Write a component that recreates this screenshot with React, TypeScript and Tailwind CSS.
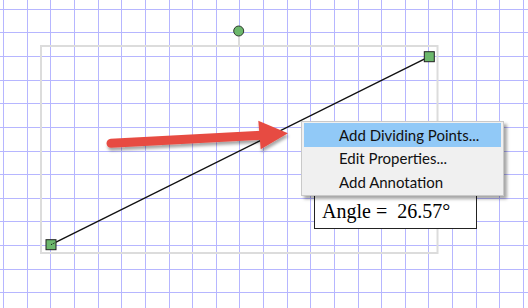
import React from 'react'

const GRID = 23.62
const cols = Array.from({ length: 23 }, (_, k) => Math.floor(3.7 + GRID * k))
const rows = Array.from({ length: 13 }, (_, k) => Math.floor(9.3 + GRID * k))

const menuItems = ['Add Dividing Points...', 'Edit Properties...', 'Add Annotation']

export default function App() {
  return (
    <div className="relative w-[528px] h-[308px] overflow-hidden bg-white">
      {/* canvas drawing */}
      <svg className="absolute inset-0" width="528" height="308" viewBox="0 0 528 308">
        <defs>
          <filter id="arrowShadow" x="-10%" y="-50%" width="120%" height="200%">
            <feDropShadow dx="1" dy="3" stdDeviation="1.5" floodColor="#000" floodOpacity="0.35" />
          </filter>
        </defs>
        {cols.map((x) => (
          <rect key={'c' + x} x={x} y={0} width={1} height={308} fill="#b6b6ff" />
        ))}
        {rows.map((y) => (
          <rect key={'r' + y} x={0} y={y} width={528} height={1} fill="#b6b6ff" />
        ))}

        {/* selection box */}
        <rect x={41} y={46} width={396.5} height={207} fill="none" stroke="#dcdcdc" strokeWidth={2} />
        <line x1={239} y1={36} x2={239} y2={46} stroke="#dcdcdc" strokeWidth={2} />
        <circle cx={238.7} cy={31} r={5} fill="#6cb86c" stroke="#2f3a2f" strokeWidth={1} />

        {/* segment */}
        <line x1={51} y1={244.7} x2={429.3} y2={56.7} stroke="#111" strokeWidth={1.4} />
        <rect x={46} y={239.7} width={10} height={10} fill="#6cb86c" stroke="#222" strokeWidth={1} />
        <rect x={424.3} y={51.7} width={10} height={10} fill="#6cb86c" stroke="#222" strokeWidth={1} />
        <line x1={51} y1={244.7} x2={55} y2={242.7} stroke="#111" strokeWidth={1} strokeDasharray="1 1" />

        {/* red arrow */}
        <g filter="url(#arrowShadow)">
          <line x1={111} y1={143.3} x2={262} y2={135.2} stroke="#e74c42" strokeWidth={9} strokeLinecap="round" />
          <polygon points="258.3,120.7 288,133.3 260.7,149.3" fill="#e74c42" />
        </g>
      </svg>

      {/* annotation (first line sits under the menu) */}
      <div className="absolute left-[314px] top-[162px] w-[163px] h-[67px] border border-[#222] bg-white pl-[7px] pt-[37px] font-['Liberation_Serif','Times_New_Roman',serif] text-[20px] leading-[23px] text-black">
        <div className="whitespace-pre">Angle =  26.57°</div>
      </div>

      {/* context menu */}
      <div className="absolute left-[301px] top-[121px] w-[203px] h-[75px] border border-[#c9c9c9] bg-[#f0f0f0] shadow-[3px_3px_3px_rgba(0,0,0,0.35)] px-[2px] pt-[1px] font-['Lato','Noto_Sans',sans-serif] text-[15px] text-[#111]">
        {menuItems.map((item, i) => (
          <div
            key={item}
            className={`h-[23.5px] flex items-center pl-[35px] whitespace-nowrap ${i === 0 ? 'bg-[#91c9f7]' : ''}`}
          >
            {item}
          </div>
        ))}
      </div>
    </div>
  )
}
